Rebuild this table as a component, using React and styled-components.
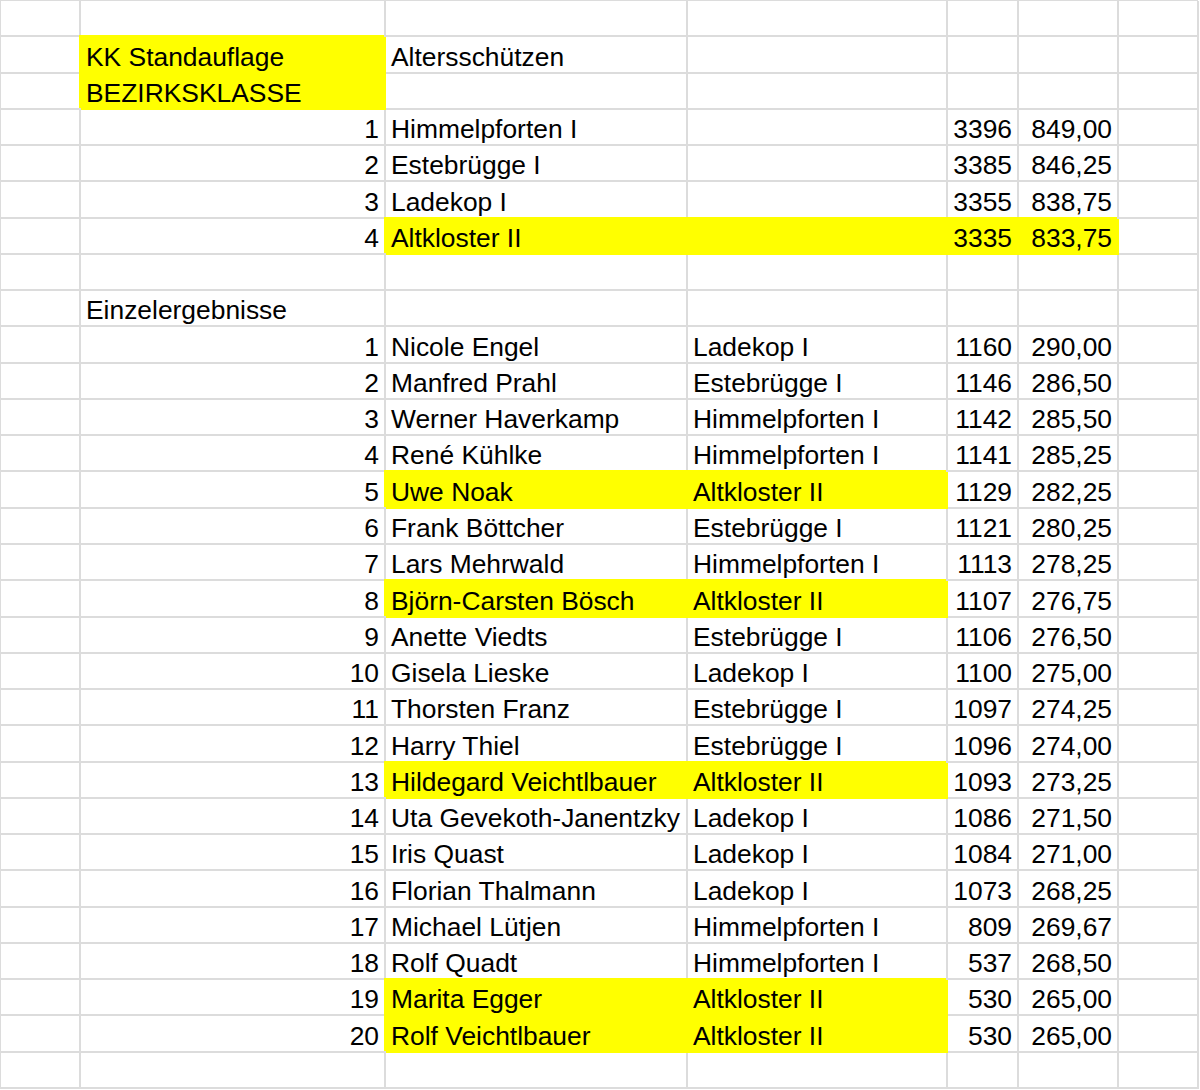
import React from "react";
import styled, { createGlobalStyle } from "styled-components";

const GlobalStyle = createGlobalStyle`
  html, body { margin: 0; padding: 0; background: #ffffff; }
  body { font-family: "Liberation Sans", Arial, sans-serif; }
`;

const GRID = "#dcdcdc";
const YELLOW = "#ffff00";

const Sheet = styled.div`
  display: grid;
  grid-template-columns: 80px 305px 302px 260px 71px 100px 80px;
  grid-template-rows: repeat(30, 1fr);
  width: 1198px;
  height: 1089px;
  box-sizing: border-box;
  border-top: 1px solid ${GRID};
  border-left: 1px solid ${GRID};
  font-family: "Liberation Sans", Arial, sans-serif;
  font-size: 26.4px;
  color: #000;
`;

const Cell = styled.div`
  box-sizing: border-box;
  display: flex;
  align-items: flex-end;
  justify-content: ${(p) => (p.$align === "right" ? "flex-end" : "flex-start")};
  padding: 0 5px;
  line-height: 30px;
  white-space: nowrap;
  overflow: visible;
  border-right: 2px solid ${(p) => (p.$fill ? YELLOW : GRID)};
  border-bottom: 2px solid ${(p) => (p.$fill ? YELLOW : GRID)};
  background: ${(p) => (p.$fill ? YELLOW : "transparent")};
  box-shadow: ${(p) => (p.$fill ? `-2px -2px 0 0 ${YELLOW}` : "none")};
`;

const teams = [
  ["1", "Himmelpforten I", "3396", "849,00", false],
  ["2", "Estebrügge I", "3385", "846,25", false],
  ["3", "Ladekop I", "3355", "838,75", false],
  ["4", "Altkloster II", "3335", "833,75", true],
];

const singles = [
  ["1", "Nicole Engel", "Ladekop I", "1160", "290,00"],
  ["2", "Manfred Prahl", "Estebrügge I", "1146", "286,50"],
  ["3", "Werner Haverkamp", "Himmelpforten I", "1142", "285,50"],
  ["4", "René Kühlke", "Himmelpforten I", "1141", "285,25"],
  ["5", "Uwe Noak", "Altkloster II", "1129", "282,25"],
  ["6", "Frank Böttcher", "Estebrügge I", "1121", "280,25"],
  ["7", "Lars Mehrwald", "Himmelpforten I", "1113", "278,25"],
  ["8", "Björn-Carsten Bösch", "Altkloster II", "1107", "276,75"],
  ["9", "Anette Viedts", "Estebrügge I", "1106", "276,50"],
  ["10", "Gisela Lieske", "Ladekop I", "1100", "275,00"],
  ["11", "Thorsten Franz", "Estebrügge I", "1097", "274,25"],
  ["12", "Harry Thiel", "Estebrügge I", "1096", "274,00"],
  ["13", "Hildegard Veichtlbauer", "Altkloster II", "1093", "273,25"],
  ["14", "Uta Gevekoth-Janentzky", "Ladekop I", "1086", "271,50"],
  ["15", "Iris Quast", "Ladekop I", "1084", "271,00"],
  ["16", "Florian Thalmann", "Ladekop I", "1073", "268,25"],
  ["17", "Michael Lütjen", "Himmelpforten I", "809", "269,67"],
  ["18", "Rolf Quadt", "Himmelpforten I", "537", "268,50"],
  ["19", "Marita Egger", "Altkloster II", "530", "265,00"],
  ["20", "Rolf Veichtlbauer", "Altkloster II", "530", "265,00"],
];

const c = (t = "", a = "left", y = false) => ({ t, a, y });
const empty = () => Array.from({ length: 7 }, () => c());

function buildRows() {
  const rows = [];
  rows.push(empty());
  rows.push([c(), c("KK Standauflage", "left", true), c("Altersschützen"), c(), c(), c(), c()]);
  rows.push([c(), c("BEZIRKSKLASSE", "left", true), c(), c(), c(), c(), c()]);
  teams.forEach(([n, name, s, avg, y]) => {
    rows.push([
      c(),
      c(n, "right"),
      c(name, "left", y),
      c("", "left", y),
      c(s, "right", y),
      c(avg, "right", y),
      c(),
    ]);
  });
  rows.push(empty());
  rows.push([c(), c("Einzelergebnisse"), c(), c(), c(), c(), c()]);
  singles.forEach(([n, name, club, s, avg]) => {
    const y = club === "Altkloster II";
    rows.push([
      c(),
      c(n, "right"),
      c(name, "left", y),
      c(club, "left", y),
      c(s, "right"),
      c(avg, "right"),
      c(),
    ]);
  });
  rows.push(empty());
  return rows;
}

export default function App() {
  const rows = buildRows();
  return (
    <>
      <GlobalStyle />
      <Sheet>
        {rows.map((row, ri) =>
          row.map((cell, ci) => (
            <Cell key={`${ri}-${ci}`} $align={cell.a} $fill={cell.y}>
              {cell.t}
            </Cell>
          ))
        )}
      </Sheet>
    </>
  );
}
